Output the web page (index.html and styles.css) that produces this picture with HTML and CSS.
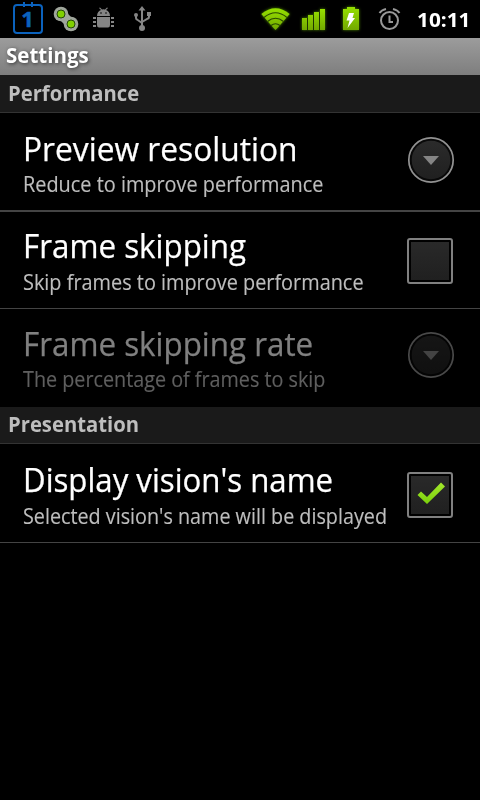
FILE: index.html
```
<!DOCTYPE html>
<html lang="en">
<head>
<meta charset="utf-8">
<title>Settings</title>
<link rel="stylesheet" href="styles.css">
</head>
<body>
<header class="status">
  <svg class="icons" width="160" height="38" viewBox="0 0 160 38">
    <g fill="none" stroke="#0b62bd" stroke-width="2">
      <rect x="14" y="5" width="28" height="28" rx="3"/>
      <path d="M24 2v5M32 2v5"/>
    </g>
    <text class="day" x="27.500" y="27" text-anchor="middle">1</text>
    <path d="M61 14L71 24" stroke="#a0a69c" stroke-width="10"/>
    <circle cx="61" cy="14" r="7.300" fill="#a0a69c"/>
    <circle cx="71" cy="24" r="7.300" fill="#a0a69c"/>
    <g fill="#80d000" stroke="#24480a"><circle cx="61" cy="14" r="4"/><circle cx="71" cy="24" r="4"/></g>
    <g fill="#858585">
      <path d="M97 16C97 12.500 99 11 101 10L99 8L100 7.500L102 9.500Q103.500 9 105 9.500L107 7.500L108 8L106 10C108 11 110 12.500 110 16Z"/>
      <path d="M97 17h13v8q0 2.500-2 2.500h-9q-2 0-2-2.500Z"/>
      <path d="M93 17h3v2h-3zM93 21h3v2h-3zM93 25h3v2h-3zM111 17h3v2h-3zM111 21h3v2h-3zM111 25h3v2h-3z"/>
      <circle cx="142" cy="28" r="3"/><path d="M142 6l3.500 4.500h-7zM147 12h4v4h-4z"/><circle cx="136" cy="15" r="2"/>
    </g>
    <g fill="#000"><circle cx="101" cy="13" r=".8"/><circle cx="106" cy="13" r=".8"/></g>
    <path d="M142 9V27M136 15v3q0 1 1 1.500l5 3.500M149 15v2q0 1-1 1.500l-6 3.500" fill="none" stroke="#858585" stroke-width="2"/>
  </svg>
  <svg class="icons icons-right" width="150" height="38" viewBox="260 0 150 38">
    <defs>
      <linearGradient id="green" x1="0" y1="0" x2="0" y2="1"><stop stop-color="#96e000"/><stop offset="1" stop-color="#72a800"/></linearGradient>
    </defs>
    <g class="glow" fill="url(#green)">
      <path d="M261.300 14Q275.500 2.500 289.700 14L277 28.500L275.500 30L274 28.500Z"/>
      <path d="M302 18h5v12h-5zM308 15h5v15h-5zM314 12h5v18h-5zM320 9h5v21h-5z"/>
      <path d="M343 9h4V7h8v2h4v21h-16z"/>
    </g>
    <path d="M264 17.500Q275.500 8 287 17.500M267.500 21.500Q275.500 15 283.500 21.500M271 25.500Q275.500 22 280 25.500" fill="none" stroke="#294800" stroke-width="1.200"/>
    <path d="M307.500 18v12M313.500 15v15M319.500 12v18" stroke="#1c3500"/>
    <path d="M349 13h5l-1.500 5h2.500l-7.500 10 2-7.500h-3z" fill="#fff"/>
    <g fill="none" stroke="#999" stroke-width="2">
      <circle cx="389.500" cy="20.500" r="8.500"/><path d="M389.500 15.500v6.500h3.500M379.500 13q2-3 6.500-4M399.500 13q-2-3-6.500-4"/>
    </g>
  </svg>
  <time class="clock">10:11</time>
</header>
<h1 class="titlebar"><span class="title">Settings</span></h1>
<main>
  <h2 class="category"><span>Performance</span></h2>
  <section class="row first">
    <div class="text"><div class="name n1">Preview resolution</div><div class="summary">Reduce to improve performance</div></div>
    <svg class="control" width="48" height="48" viewBox="0 0 48 48"><use href="#dropdown"/></svg>
  </section>
  <section class="row second">
    <div class="text"><div class="name">Frame skipping</div><div class="summary">Skip frames to improve performance</div></div>
    <div class="checkbox"></div>
  </section>
  <section class="row last disabled">
    <div class="text"><div class="name">Frame skipping rate</div><div class="summary narrow">The percentage of frames to skip</div></div>
    <svg class="control" width="48" height="48" viewBox="0 0 48 48">
      <defs>
        <linearGradient id="face" x1="0" y1="0" x2="0" y2="1"><stop stop-color="#2b2b2b"/><stop offset="1" stop-color="#202020"/></linearGradient>
        <g id="dropdown"><circle cx="24" cy="24" r="22.200" fill="#080808" stroke="#929292" stroke-width="1.700"/><circle cx="24" cy="24" r="19.300" fill="url(#face)"/><path d="M16 20h16l-8 9z" fill="#858585"/></g>
      </defs>
      <use href="#dropdown"/>
    </svg>
  </section>
  <h2 class="category"><span>Presentation</span></h2>
  <section class="row display">
    <div class="text"><div class="name n4">Display vision's name</div><div class="summary narrow">Selected vision's name will be displayed</div></div>
    <div class="checkbox"><svg width="46" height="46" viewBox="0 0 46 46"><defs><linearGradient id="tick" x1="0" y1="0" x2="0" y2="1"><stop stop-color="#a3e82b"/><stop offset="1" stop-color="#7bd00c"/></linearGradient></defs><path d="M10.500 23l3.500-3.500 6 5.500L34 10.500l4 4L20 32z" fill="url(#tick)"/></svg></div>
  </section>
</main>
</body>
</html>
```
FILE: styles.css
```
* { box-sizing: border-box; }
body { margin: 0; background: #000; color: #fff; font-family: "Open Sans", "Noto Sans", sans-serif; }
h1, h2 { margin: 0; font-weight: 700; }
.status { height: 38px; display: flex; }
.icons { display: block; flex: none; }
.icons-right { margin-left: 100px; }
.day { fill: #0b62bd; stroke: #0b62bd; stroke-width: .5px; font-size: 22px; font-weight: 700; }
.glow { filter: drop-shadow(0 0 1.5px #4f8a00); }
.clock { font-size: 20px; font-weight: 700; line-height: 39px; margin-left: 7px; white-space: nowrap; transform: scaleX(1.04); }
.titlebar { height: 37px; padding-left: 6px; background: linear-gradient(#9c9c9c, #7e7e7e); font-size: 21px; line-height: 35px; text-shadow: 1px 1px 4px #333; }
.category { height: 38px; padding-left: 8px; background: #1a1a1a; border-bottom: 1px solid #333; color: #bebebe; font-size: 21px; line-height: 37px; }
.row { height: 99px; padding: 0 25px 0 23px; display: flex; justify-content: space-between; border-bottom: 1px solid #444; }
.first { border-bottom-width: 2px; }
.second { height: 97px; }
.last { height: 98px; border-bottom: 0; }
.last + .category { height: 37px; line-height: 35px; }
.text { width: 370px; flex: none; padding-top: 16px; }
.second .text { padding-top: 14px; }
.last .text { padding-top: 15px; }
.name, .summary, .title, .category span, .clock { transform-origin: left; white-space: nowrap; }
.title, .category span { display: inline-block; }
.title { transform: scaleX(.976); }
.category span { transform: scaleX(.964); }
.name { font-size: 33px; line-height: 40px; transform: scaleX(.95); -webkit-text-stroke: .25px; }
.n1 { transform: scaleX(.961); }
.n4 { transform: scaleX(.945); }
.summary { font-size: 21px; line-height: 31px; color: #bebebe; transform: scaleX(.947); -webkit-text-stroke: .15px; }
.second .summary, .display .summary { margin-top: 1px; }
.narrow { transform: scaleX(.941); }
.disabled { color: #808080; }
.disabled .summary { color: #5f5f5f; }
.disabled .control { opacity: .5; margin-top: 22px; }
.control { flex: none; margin-top: 23px; }
.checkbox { width: 46px; height: 46px; margin: 26px 2px 0 0; border: 2px solid #808080; border-radius: 3px; flex: none; background: linear-gradient(#292929, #202020) 2px 2px / 38px 38px no-repeat; }
.display .checkbox { margin-top: 28px; }
.checkbox svg { display: block; margin: -2px; }
```
